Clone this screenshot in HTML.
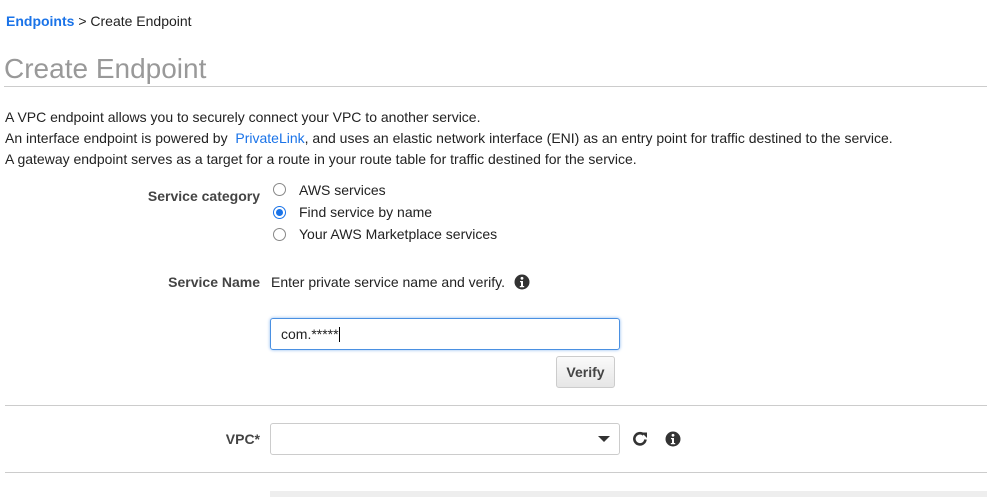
<!DOCTYPE html>
<html><head><style>
body{margin:0;width:987px;height:497px;overflow:hidden;background:#fff;font-family:"Liberation Sans",Arial,sans-serif;font-size:14px;color:#222;position:relative}
.a{position:absolute;white-space:nowrap}
.lbl{font-weight:bold;color:#444;text-align:right;width:260px;left:0}
.radio{position:absolute;width:11px;height:11px;border:1px solid #888;border-radius:50%;background:#fff}
.hr{position:absolute;height:1px;background:#ccc}
</style></head><body>
<div class="a" style="left:6px;top:13px"><b style="color:#1a73e8">Endpoints</b> &gt; Create Endpoint</div>
<div class="a" style="left:4px;top:53px;font-size:28px;color:#999">Create Endpoint</div>
<div class="hr" style="left:4px;top:86px;width:983px"></div>
<div class="a" style="left:5px;top:107px;line-height:21px">A VPC endpoint allows you to securely connect your VPC to another service.<br>An interface endpoint is powered by <span style="color:#1a73e8">&nbsp;PrivateLink</span>, and uses an elastic network interface (ENI) as an entry point for traffic destined to the service.<br>A gateway endpoint serves as a target for a route in your route table for traffic destined for the service.</div>
<div class="a lbl" style="top:188px">Service category</div>
<div class="radio" style="left:273px;top:183px"></div>
<div class="radio" style="left:273px;top:206px;border-color:#1a73e8"><div style="position:absolute;left:2px;top:2px;width:7px;height:7px;border-radius:50%;background:#1a73e8"></div></div>
<div class="radio" style="left:273px;top:228px"></div>
<div class="a" style="left:299px;top:182px">AWS services</div>
<div class="a" style="left:299px;top:204px">Find service by name</div>
<div class="a" style="left:299px;top:226px">Your AWS Marketplace services</div>
<div class="a lbl" style="top:274px">Service Name</div>
<div class="a" style="left:271px;top:274px">Enter private service name and verify.</div>
<svg class="a" style="left:514px;top:274px" width="16" height="16" viewBox="0 0 16 16"><circle cx="8" cy="8" r="7.5" fill="#333"/><circle cx="8" cy="4.3" r="1.4" fill="#fff"/><path d="M6 7h3v5h1.2v1.2H5.8V12H7V8.2H6z" fill="#fff"/></svg>
<div class="a" style="left:270px;top:318px;width:348px;height:30px;border:1px solid #4a90e2;border-radius:3px;box-shadow:0 0 3px #8ab8f0"></div>
<div class="a" style="left:281px;top:326px">com.*****<span style="display:inline-block;width:1px;height:15px;background:#000;vertical-align:-3px"></span></div>
<div class="a" style="left:556px;top:356px;width:57px;height:30px;border:1px solid #ccc;border-radius:3px;background:linear-gradient(#fafafa,#e6e6e6);font-weight:bold;color:#444;text-align:center;line-height:30px">Verify</div>
<div class="hr" style="left:5px;top:405px;width:982px"></div>
<div class="a lbl" style="top:431px">VPC*</div>
<div class="a" style="left:270px;top:423px;width:348px;height:30px;border:1px solid #ccc;border-radius:3px"></div>
<div class="a" style="left:598px;top:436px;width:0;height:0;border-left:6px solid transparent;border-right:6px solid transparent;border-top:6px solid #333"></div>
<svg class="a" style="left:631px;top:430px" width="18" height="18" viewBox="0 0 18 18"><path d="M14.5 9.5A5.6 5.6 0 1 1 12.6 4.6" fill="none" stroke="#333" stroke-width="2.6"/><path d="M10.5 2.5h5.5v5.5z" fill="#333"/></svg>
<svg class="a" style="left:665px;top:431px" width="16" height="16" viewBox="0 0 16 16"><circle cx="8" cy="8" r="7.5" fill="#333"/><circle cx="8" cy="4.3" r="1.4" fill="#fff"/><path d="M6 7h3v5h1.2v1.2H5.8V12H7V8.2H6z" fill="#fff"/></svg>
<div class="hr" style="left:5px;top:472px;width:982px"></div>
<div class="a" style="left:270px;top:491px;width:717px;height:6px;background:#eee"></div>
</body></html>
